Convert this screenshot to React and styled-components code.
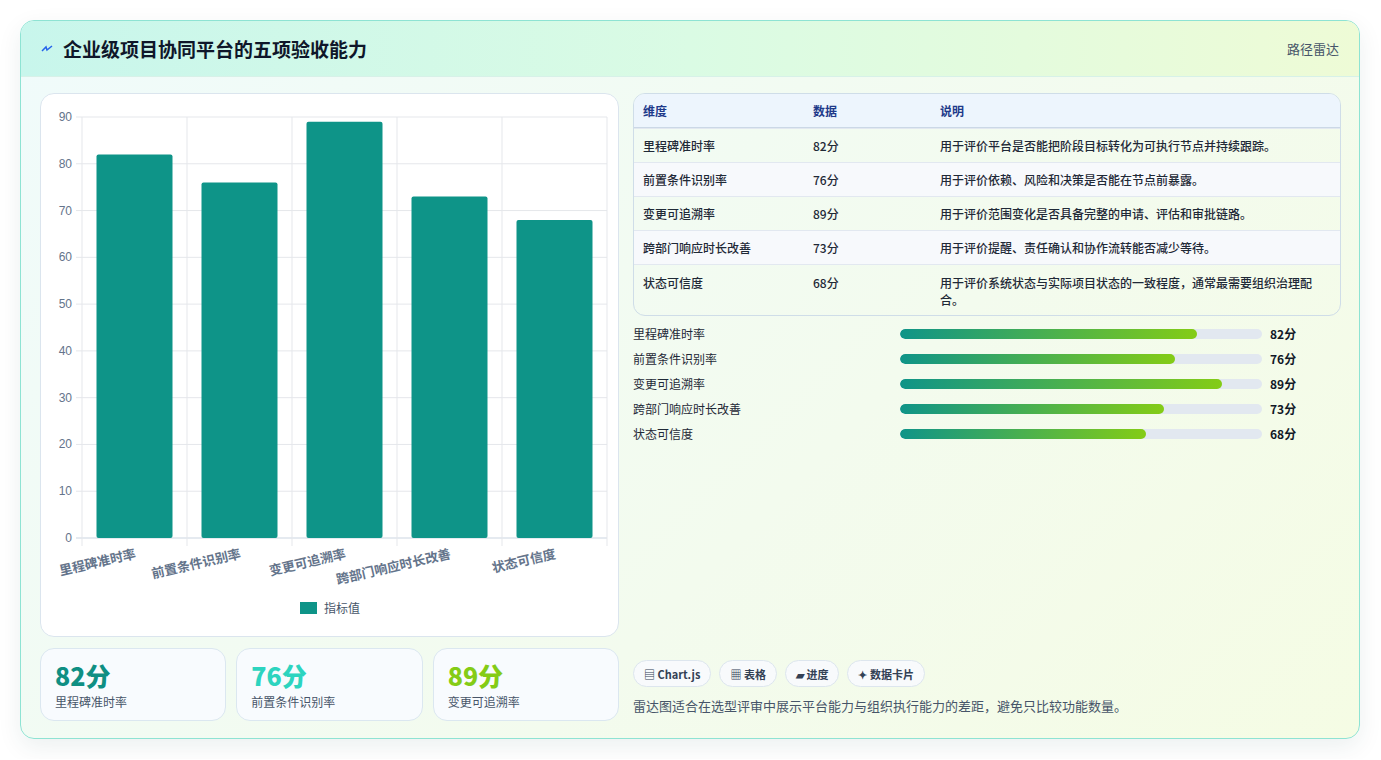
import React from "react";
import styled, { createGlobalStyle } from "styled-components";

const GlobalStyle = createGlobalStyle`
  body {
    margin: 0;
    background: #ffffff;
    font-family: "Noto Sans CJK SC", "Noto Sans", sans-serif;
  }
`;

const metrics = [
  { name: "里程碑准时率", value: 82, desc: "用于评价平台是否能把阶段目标转化为可执行节点并持续跟踪。" },
  { name: "前置条件识别率", value: 76, desc: "用于评价依赖、风险和决策是否能在节点前暴露。" },
  { name: "变更可追溯率", value: 89, desc: "用于评价范围变化是否具备完整的申请、评估和审批链路。" },
  { name: "跨部门响应时长改善", value: 73, desc: "用于评价提醒、责任确认和协作流转能否减少等待。" },
  { name: "状态可信度", value: 68, desc: "用于评价系统状态与实际项目状态的一致程度，通常最需要组织治理配合。" },
];

const Page = styled.div`
  padding: 20px 20px 20px 20px;
`;

const Card = styled.div`
  width: 1340px;
  height: 719px;
  box-sizing: border-box;
  border: 1px solid #8ee3d3;
  border-radius: 14px;
  overflow: hidden;
  display: flex;
  flex-direction: column;
  background: linear-gradient(135deg, #f0fbfb 0%, #f3fbee 60%, #f5fce4 100%);
  box-shadow: 0 8px 24px rgba(15, 60, 60, 0.08);
`;

const Header = styled.div`
  height: 55px;
  flex: none;
  display: flex;
  align-items: center;
  justify-content: space-between;
  padding: 0 20px 0 20px;
  background: linear-gradient(90deg, #c8f6ec 0%, #dafbe4 50%, #eefbd6 100%);
  border-bottom: 1px solid #d7f1e8;
`;

const Title = styled.h1`
  margin: 0;
  display: flex;
  align-items: center;
  gap: 10px;
  font-size: 19px;
  font-weight: 700;
  color: #0f172a;
`;

const Tag = styled.span`
  font-size: 13px;
  color: #475569;
`;

const Body = styled.div`
  flex: 1;
  display: grid;
  grid-template-columns: 579px 708px;
  gap: 14px;
  padding: 16px 19px 18px 19px;
`;

const Col = styled.div`
  display: flex;
  flex-direction: column;
  gap: 11px;
`;

const ChartCard = styled.div`
  height: 544px;
  box-sizing: border-box;
  border: 1px solid #dbe5ee;
  border-radius: 14px;
  background: #ffffff;
  overflow: hidden;
`;

const Stats = styled.div`
  display: grid;
  grid-template-columns: repeat(3, 1fr);
  gap: 10px;
`;

const Stat = styled.div`
  height: 73px;
  box-sizing: border-box;
  border: 1px solid #dbe7f0;
  border-radius: 14px;
  background: #f8fbfe;
  padding: 10px 14px;
`;

const StatValue = styled.div`
  font-size: 25px;
  font-weight: 800;
  line-height: 32px;
  color: ${(p) => p.$color};
`;

const StatLabel = styled.div`
  font-size: 12px;
  color: #475569;
  margin-top: 2px;
`;

const Table = styled.div`
  border: 1px solid #cfdde8;
  border-radius: 12px;
  overflow: hidden;
  font-size: 12px;
`;

const Row = styled.div`
  display: grid;
  grid-template-columns: 170px 127px 1fr;
  padding: 0 28px 0 9px;
  min-height: 34px;
  align-items: ${(p) => (p.$tall ? "start" : "center")};
  padding-top: ${(p) => (p.$tall ? "9px" : "0")};
  padding-bottom: ${(p) => (p.$tall ? "7px" : "0")};
  box-sizing: border-box;
  background: ${(p) => (p.$head ? "#edf5fd" : p.$alt ? "#f7f9fc" : "transparent")};
  color: ${(p) => (p.$head ? "#1e3a8a" : "#1f2937")};
  font-weight: ${(p) => (p.$head ? 600 : 500)};
  border-top: ${(p) => (p.$head ? "none" : "1px solid #e2e8f0")};
  ${(p) => p.$head && "border-bottom: 1px solid #cbd8e6;"}
  line-height: 17px;
`;

const Bars = styled.div`
  display: flex;
  flex-direction: column;
  gap: 8px;
  margin-top: 9px;
`;

const BarRow = styled.div`
  display: grid;
  grid-template-columns: 267px 370px 1fr;
  gap: 0;
  align-items: center;
  font-size: 12px;
  color: #1f2937;
  height: 17px;
`;

const Track = styled.div`
  height: 10px;
  border-radius: 5px;
  background: #e2e8f0;
  overflow: hidden;
  margin-right: 8px;
`;

const Fill = styled.div`
  height: 100%;
  border-radius: 5px;
  background: linear-gradient(90deg, #0f9488, #84cc16);
`;

const BarVal = styled.span`
  font-weight: 700;
  color: #111827;
`;

const Spacer = styled.div`
  flex: 1;
`;

const Chips = styled.div`
  display: flex;
  gap: 8px;
`;

const Chip = styled.span`
  height: 27px;
  display: inline-flex;
  align-items: center;
  padding: 0 10px;
  border: 1px solid #dde6ee;
  border-radius: 14px;
  background: #f8fafc;
  font-size: 11px;
  font-weight: 700;
  color: #334155;
  box-sizing: border-box;
`;

const Note = styled.p`
  margin: 9px 0 6px 0;
  font-size: 13px;
  color: #475569;
`;

const BarChart = () => {
  const x0 = 41, x1 = 566, y0 = 23, y1 = 444;
  const step = (x1 - x0) / 5;
  const yOf = (v) => y1 - ((y1 - y0) * v) / 90;
  return (
    <svg width="579" height="544">
      {[0, 10, 20, 30, 40, 50, 60, 70, 80, 90].map((t) => (
        <g key={t}>
          <line x1={x0 - 6} x2={x1} y1={yOf(t)} y2={yOf(t)} stroke={t === 0 ? "#cbd5e1" : "#e5e7eb"} />
          <text x={x0 - 10} y={yOf(t) + 4} textAnchor="end" fontSize="12" fill="#64748b" fontFamily="Liberation Sans, sans-serif">{t}</text>
        </g>
      ))}
      {[0, 1, 2, 3, 4, 5].map((i) => (
        <line key={i} x1={x0 + i * step} x2={x0 + i * step} y1={y0} y2={y1 + 8} stroke="#e5e7eb" />
      ))}
      {metrics.map((m, i) => {
        const cx = x0 + step * i + step / 2;
        return (
          <g key={m.name}>
            <rect x={cx - 38} y={yOf(m.value)} width="76" height={y1 - yOf(m.value)} rx="2" fill="#0e9488" />
            <text
              x={cx + 2}
              y={y1 + 20}
              textAnchor="end"
              fontSize="13"
              fontWeight="600"
              fill="#64748b"
              transform={`rotate(-13 ${cx + 2} ${y1 + 20})`}
            >
              {m.name}
            </text>
          </g>
        );
      })}
      <rect x="259" y="508" width="17" height="12" fill="#0e9488" />
      <text x="283" y="519" fontSize="12" fill="#475569">指标值</text>
    </svg>
  );
};

const App = () => (
  <Page>
    <GlobalStyle />
    <Card>
      <Header>
        <Title>
          <svg width="12" height="10" viewBox="0 0 12 10">
            <path d="M1 7 L5 3 L6 6 L11 2" stroke="#2563eb" strokeWidth="1.5" fill="none" />
          </svg>
          企业级项目协同平台的五项验收能力
        </Title>
        <Tag>路径雷达</Tag>
      </Header>
      <Body>
        <Col>
          <ChartCard>
            <BarChart />
          </ChartCard>
          <Stats>
            <Stat>
              <StatValue $color="#0f8f83">82分</StatValue>
              <StatLabel>里程碑准时率</StatLabel>
            </Stat>
            <Stat>
              <StatValue $color="#2dd4bf">76分</StatValue>
              <StatLabel>前置条件识别率</StatLabel>
            </Stat>
            <Stat>
              <StatValue $color="#84cc16">89分</StatValue>
              <StatLabel>变更可追溯率</StatLabel>
            </Stat>
          </Stats>
        </Col>
        <Col style={{ gap: 0 }}>
          <Table>
            <Row $head>
              <span>维度</span>
              <span>数据</span>
              <span>说明</span>
            </Row>
            {metrics.map((m, i) => (
              <Row key={m.name} $alt={i % 2 === 1} $tall={i === 4}>
                <span>{m.name}</span>
                <span>{m.value}分</span>
                <span>{m.desc}</span>
              </Row>
            ))}
          </Table>
          <Bars>
            {metrics.map((m) => (
              <BarRow key={m.name}>
                <span>{m.name}</span>
                <Track>
                  <Fill style={{ width: `${m.value}%` }} />
                </Track>
                <BarVal>{m.value}分</BarVal>
              </BarRow>
            ))}
          </Bars>
          <Spacer />
          <Chips>
            <Chip>▤ Chart.js</Chip>
            <Chip>▦ 表格</Chip>
            <Chip>▰ 进度</Chip>
            <Chip>✦ 数据卡片</Chip>
          </Chips>
          <Note>雷达图适合在选型评审中展示平台能力与组织执行能力的差距，避免只比较功能数量。</Note>
        </Col>
      </Body>
    </Card>
  </Page>
);

export default App;
